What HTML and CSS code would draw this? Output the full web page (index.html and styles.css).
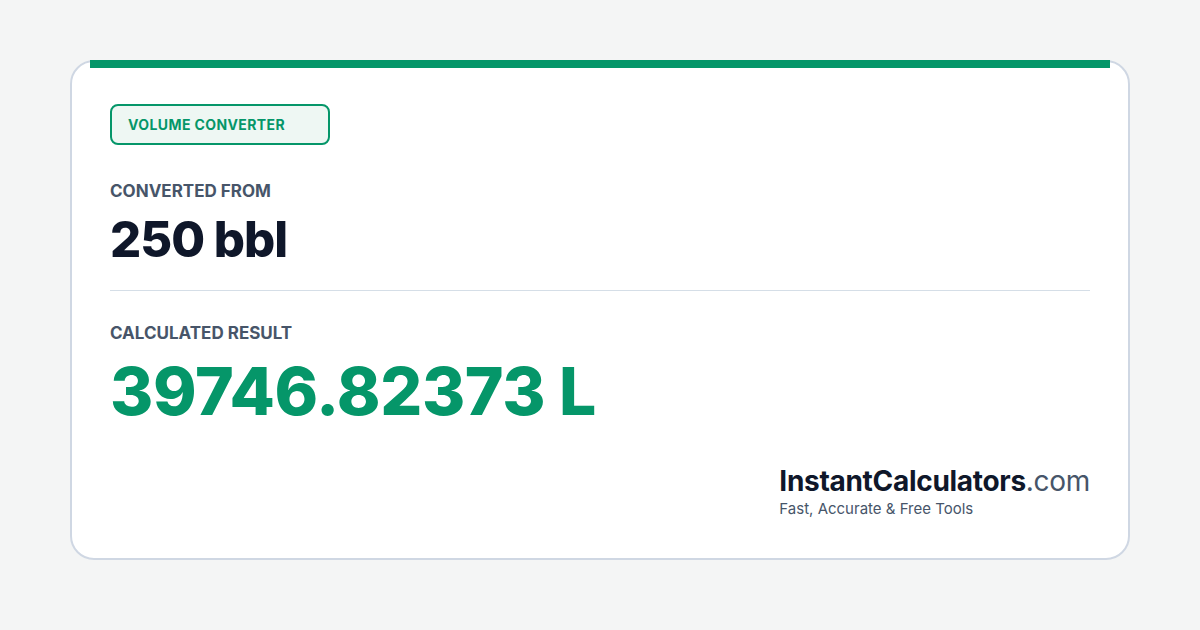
FILE: index.html
```html
<!DOCTYPE html>
<html lang="en">
<head>
    <meta charset="UTF-8">
    <meta name="viewport" content="width=device-width, initial-scale=1.0">
    <title>Volume Converter - 250 bbl to L</title>
    <link rel="stylesheet" href="styles.css">
</head>
<body>
    <div class="card">
        <div class="accent-bar"></div>

        <div class="badge">VOLUME CONVERTER</div>

        <div class="label from-label">CONVERTED FROM</div>
        <div class="from-value">250 bbl</div>

        <div class="divider"></div>

        <div class="label result-label">CALCULATED RESULT</div>
        <div class="result-value">39746.82373 L</div>

        <div class="brand">
            <div class="brand-name">InstantCalculators<span class="brand-tld">.com</span></div>
            <div class="brand-tagline">Fast, Accurate &amp; Free Tools</div>
        </div>
    </div>
</body>
</html>
```

FILE: styles.css
```css
* {
    margin: 0;
    padding: 0;
    box-sizing: border-box;
    font-family: 'Inter', 'Liberation Sans', sans-serif;
}

body {
    background: #f4f5f5;
    padding: 60px 70px 70px;
}

.card {
    height: 500px;
    background: #ffffff;
    border: 2px solid #cfd7e3;
    border-radius: 24px;
    padding: 0 38px 40px;
    display: flex;
    flex-direction: column;
    align-items: flex-start;
}

.accent-bar {
    align-self: stretch;
    height: 8px;
    margin: -2px -20px 0;
    background: #059669;
}

.badge {
    margin-top: 36px;
    width: 220px;
    height: 41px;
    padding: 0 16px;
    display: flex;
    align-items: center;
    border: 2px solid #059669;
    border-radius: 8px;
    background: #eef7f3;
    color: #059669;
    font-size: 14px;
    font-weight: 700;
    letter-spacing: 0.4px;
}

.label {
    color: #475569;
    font-size: 17px;
    font-weight: 700;
    line-height: 20px;
}

.from-label {
    margin-top: 36px;
}

.from-value {
    margin-top: 14px;
    color: #0f172a;
    font-size: 49px;
    font-weight: 800;
    line-height: 1;
    letter-spacing: -1px;
}

.divider {
    align-self: stretch;
    height: 1px;
    margin-top: 26px;
    background: #d5dee7;
}

.result-label {
    margin-top: 32px;
}

.result-value {
    margin-top: 15px;
    color: #059669;
    font-size: 66px;
    font-weight: 800;
    line-height: 1;
    letter-spacing: -0.4px;
}

.brand {
    margin-top: auto;
    align-self: flex-end;
}

.brand-name {
    color: #0f172a;
    font-size: 28px;
    font-weight: 700;
    line-height: 34px;
    letter-spacing: -0.3px;
}

.brand-tld {
    color: #475569;
    font-weight: 400;
}

.brand-tagline {
    margin-top: 2px;
    color: #475569;
    font-size: 15px;
    line-height: 18px;
}
```
